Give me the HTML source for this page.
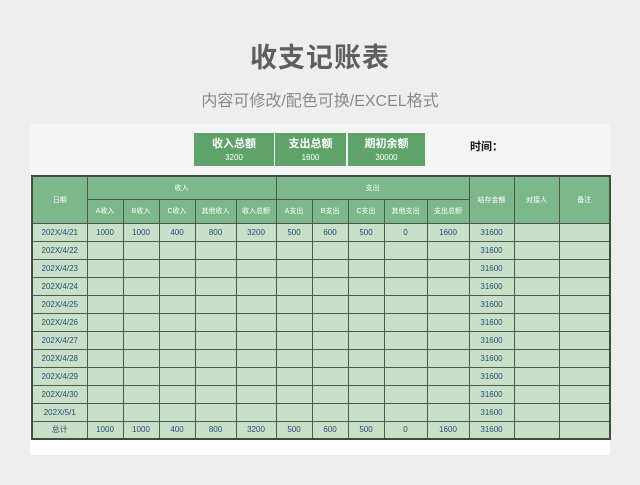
<!DOCTYPE html>
<html><head><meta charset="utf-8"><style>
*{margin:0;padding:0;box-sizing:border-box}
body{width:640px;height:485px;background:#eeeeee;position:relative;overflow:hidden;font-family:"Liberation Sans","Noto Sans CJK SC",sans-serif}
.t{position:absolute;left:0;width:640px;text-align:center}
#title{top:36px;font-size:27px;color:#5f5f5f;font-weight:bold;letter-spacing:1px}
#sub{top:87px;font-size:16px;color:#8a8a8a}
#panel{position:absolute;left:30px;top:124px;width:580px;height:331px;background:#fff}
#hdr{position:absolute;left:30px;top:124px;width:580px;height:51px;background:#f4f4f4}
.box{position:absolute;top:133px;height:33px;background:#5fa36a;color:#fff;text-align:center}
.box b{display:block;font-size:11px;margin-top:2px}
.box span{display:block;font-size:8px;margin-top:2px}
#time{position:absolute;left:470px;top:138px;font-size:11px;font-weight:bold;color:#111}
table{position:absolute;left:31px;top:175px;border-collapse:collapse;table-layout:fixed;border:2px solid #3e4e40}
td{border:1px solid #4a5a4c;text-align:center;font-size:8px;padding:0;overflow:hidden;white-space:nowrap}
tr.h td{background:#7db88a;color:#fff;height:23.5px;font-size:7px}
tr.d td{background:#c8e0c8;color:#2a4a7a;height:18px}
</style></head><body>
<div class="t" id="title">收支记账表</div>
<div class="t" id="sub">内容可修改/配色可换/EXCEL格式</div>
<div id="panel"></div><div id="hdr"></div>
<div class="box" style="left:194px;width:80px"><b>收入总额</b><span>3200</span></div>
<div class="box" style="left:275px;width:71px"><b>支出总额</b><span>1600</span></div>
<div class="box" style="left:348px;width:77px"><b>期初余额</b><span>30000</span></div>
<div id="time">时间：</div>
<table>
<colgroup><col style="width:55px"><col style="width:36px"><col style="width:36px"><col style="width:36px"><col style="width:41px"><col style="width:40px"><col style="width:36px"><col style="width:36px"><col style="width:36px"><col style="width:43px"><col style="width:42px"><col style="width:45px"><col style="width:45px"><col style="width:51px"></colgroup>
<tr class="h"><td rowspan="2">日期</td><td colspan="5">收入</td><td colspan="5">支出</td><td rowspan="2">结存金额</td><td rowspan="2">对接人</td><td rowspan="2">备注</td></tr>
<tr class="h"><td>A收入</td><td>B收入</td><td>C收入</td><td>其他收入</td><td>收入总额</td><td>A支出</td><td>B支出</td><td>C支出</td><td>其他支出</td><td>支出总额</td></tr>
<tr class="d"><td>202X/4/21</td><td>1000</td><td>1000</td><td>400</td><td>800</td><td>3200</td><td>500</td><td>600</td><td>500</td><td>0</td><td>1600</td><td>31600</td><td></td><td></td></tr>
<tr class="d"><td>202X/4/22</td><td></td><td></td><td></td><td></td><td></td><td></td><td></td><td></td><td></td><td></td><td>31600</td><td></td><td></td></tr>
<tr class="d"><td>202X/4/23</td><td></td><td></td><td></td><td></td><td></td><td></td><td></td><td></td><td></td><td></td><td>31600</td><td></td><td></td></tr>
<tr class="d"><td>202X/4/24</td><td></td><td></td><td></td><td></td><td></td><td></td><td></td><td></td><td></td><td></td><td>31600</td><td></td><td></td></tr>
<tr class="d"><td>202X/4/25</td><td></td><td></td><td></td><td></td><td></td><td></td><td></td><td></td><td></td><td></td><td>31600</td><td></td><td></td></tr>
<tr class="d"><td>202X/4/26</td><td></td><td></td><td></td><td></td><td></td><td></td><td></td><td></td><td></td><td></td><td>31600</td><td></td><td></td></tr>
<tr class="d"><td>202X/4/27</td><td></td><td></td><td></td><td></td><td></td><td></td><td></td><td></td><td></td><td></td><td>31600</td><td></td><td></td></tr>
<tr class="d"><td>202X/4/28</td><td></td><td></td><td></td><td></td><td></td><td></td><td></td><td></td><td></td><td></td><td>31600</td><td></td><td></td></tr>
<tr class="d"><td>202X/4/29</td><td></td><td></td><td></td><td></td><td></td><td></td><td></td><td></td><td></td><td></td><td>31600</td><td></td><td></td></tr>
<tr class="d"><td>202X/4/30</td><td></td><td></td><td></td><td></td><td></td><td></td><td></td><td></td><td></td><td></td><td>31600</td><td></td><td></td></tr>
<tr class="d"><td>202X/5/1</td><td></td><td></td><td></td><td></td><td></td><td></td><td></td><td></td><td></td><td></td><td>31600</td><td></td><td></td></tr>
<tr class="d"><td>总计</td><td>1000</td><td>1000</td><td>400</td><td>800</td><td>3200</td><td>500</td><td>600</td><td>500</td><td>0</td><td>1600</td><td>31600</td><td></td><td></td></tr>
</table>
</body></html>
